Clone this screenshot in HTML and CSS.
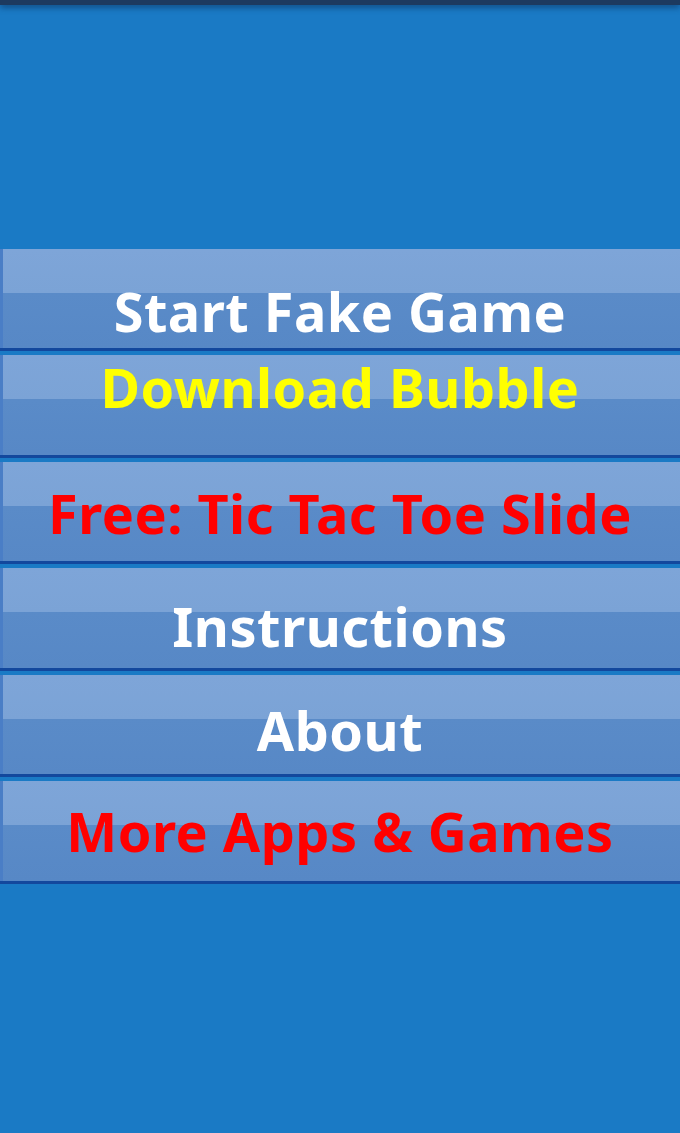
FILE: index.html
```html
<!DOCTYPE html>
<html>
<head>
<meta charset="utf-8">
<link rel="stylesheet" href="styles.css">
</head>
<body>
<div class="statusbar"></div>
<div class="menu">
  <div class="btn btn-1"><span class="label white">Start Fake Game</span></div>
  <div class="btn btn-2"><span class="label yellow">Download Bubble</span></div>
  <div class="btn btn-3"><span class="label red">Free: Tic Tac Toe Slide</span></div>
  <div class="btn btn-4"><span class="label white">Instructions</span></div>
  <div class="btn btn-5"><span class="label white">About</span></div>
  <div class="btn btn-6"><span class="label red">More Apps &amp; Games</span></div>
</div>
</body>
</html>
```
FILE: styles.css
```css
html, body {
  margin: 0;
  padding: 0;
  height: 100%;
}
body {
  background: #1a7ac5;
  font-family: "Noto Sans", "Open Sans", sans-serif;
  overflow: hidden;
}
.statusbar {
  height: 5px;
  background: #1d3a5f;
  box-shadow: 0 2px 6px rgba(10, 40, 80, 0.7);
}
.menu {
  display: flex;
  flex-direction: column;
  gap: 4px;
  padding-top: 244px;
}
.btn {
  height: 99px;
  border-bottom: 3px solid #13489d;
  background: linear-gradient(to bottom, #7ea5d8 0, #7ba3d6 44px, #5a8bc8 44px, #5788c6 99px);
  box-shadow: inset 3px 0 0 #4a7ec6;
  display: flex;
  justify-content: center;
  box-sizing: content-box;
}
.btn-2, .btn-4, .btn-6 {
  height: 100px;
}
.label {
  font-weight: 700;
  font-size: 54px;
  line-height: 1;
  letter-spacing: 0.5px;
  white-space: nowrap;
}
.white { color: #ffffff; }
.yellow { color: #ffff00; }
.red { color: #ff0000; }
.btn-1 .label { margin-top: 35px; }
.btn-2 .label { margin-top: 5px; }
.btn-3 .label { margin-top: 24px; }
.btn-4 .label { margin-top: 31px; }
.btn-5 .label { margin-top: 28px; }
.btn-6 .label { margin-top: 23px; }
```
